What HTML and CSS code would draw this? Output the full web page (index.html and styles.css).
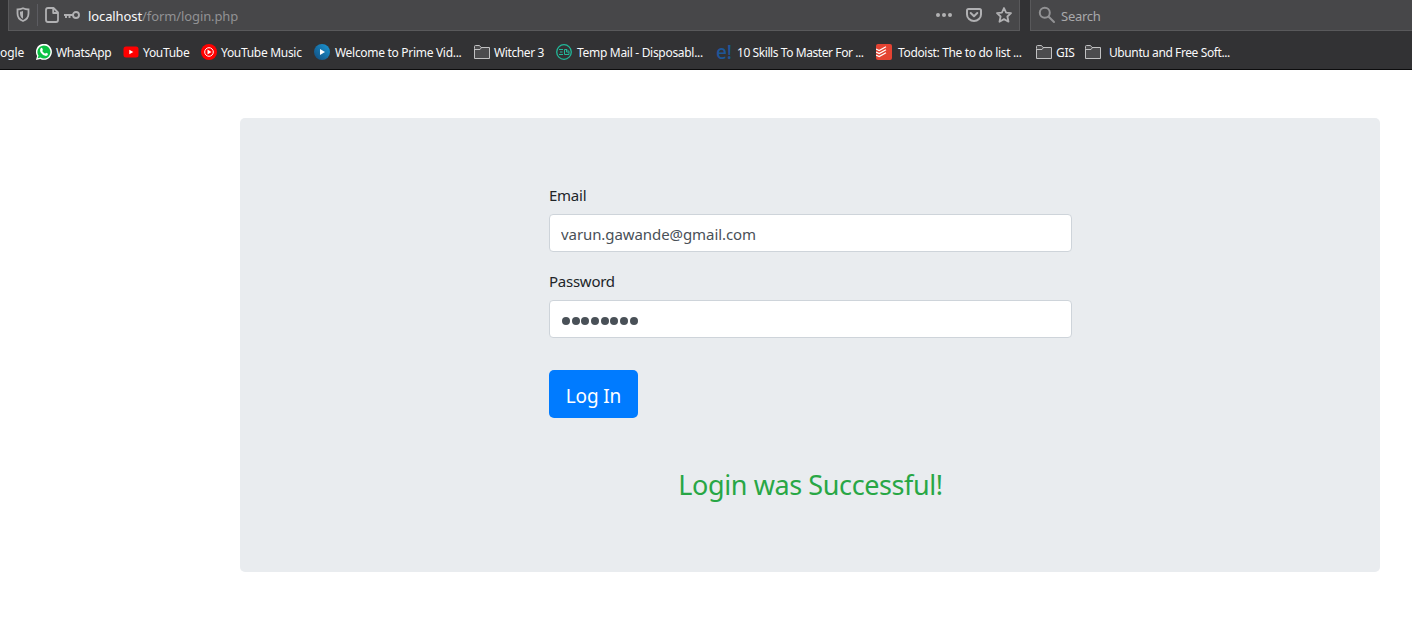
FILE: index.html
```
<!DOCTYPE html>
<html lang="en">
<head>
<meta charset="utf-8">
<title>Login</title>
<link rel="stylesheet" href="styles.css">
</head>
<body>
<header class="chrome">
  <div class="nav">
    <div class="urlbar">
      <svg class="shield" width="14" height="16" viewBox="0 0 14 16" fill="none" stroke="#b1b1b3"><path stroke-width="1.8" d="M1.5 2.5Q4.5 2.5 7 1.3Q9.500 2.500 12.500 2.500V6.500Q12.500 12 7 14Q1.500 12 1.500 6.500Z"/><path fill="#b1b1b3" stroke="none" d="M7 4v7.700Q4.200 10.500 4 6.500V4.700Q5.500 4.600 7 4Z"/></svg>
      <span class="divider"></span>
      <svg class="page-icon" width="14" height="16" viewBox="0 0 14 16" fill="none" stroke="#b1b1b3" stroke-width="1.8" stroke-linejoin="round"><path d="M3 1H8.500L13 5.500V13Q13 15 11 15H3Q1 15 1 13V3Q1 1 3 1ZM8.200 1.500V6H12.500"/></svg>
      <svg class="key" width="16" height="10" viewBox="0 0 16 10" fill="none" stroke="#b1b1b3" stroke-width="1.9"><circle cx="12" cy="5" r="3"/><path d="M9 5H0M2 5v3M5.500 5v3"/></svg>
      <span class="url"><b>localhost</b>/form/login.php</span>
      <svg class="dots" width="16" height="16" viewBox="0 0 16 16" fill="#b1b1b3"><circle cx="2" cy="8" r="2"/><circle cx="8" cy="8" r="2"/><circle cx="14" cy="8" r="2"/></svg>
      <svg width="16" height="16" viewBox="0 0 16 16" fill="none" stroke="#b1b1b3" stroke-width="2" stroke-linecap="round" stroke-linejoin="round"><path d="M2.500 2H13.500Q15 2 15 3.500V7.500A7 6.500 0 0 1 1 7.500V3.500Q1 2 2.500 2ZM4.700 6L8 9.200L11.300 6"/></svg>
      <svg width="16" height="16" viewBox="0 0 16 16" fill="none" stroke="#b1b1b3" stroke-width="1.8" stroke-linejoin="round"><path d="M8 1L10.100 5.600L15 6.100L11.400 9.500L12.500 14.700L8 12.100L3.500 14.700L4.600 9.500L1 6.100L5.900 5.600Z"/></svg>
    </div>
    <div class="searchbar">
      <svg width="18" height="18" viewBox="0 0 18 18" fill="none" stroke="#929294" stroke-width="2" stroke-linecap="round"><circle cx="6.800" cy="6.800" r="5"/><path d="M10.700 10.700L16 16"/></svg>
      <span class="search-text">Search</span>
    </div>
  </div>
  <nav class="bookmarks">
    <span class="mark m-google"><span>ogle</span></span>
    <span class="mark m-whatsapp"><svg width="16" height="16" viewBox="0 0 16 16"><path fill="#fff" d="M0 16L1.100 12A8 8 0 1 1 4.200 14.900Z"/><path fill="#0cc143" d="M1.700 14.300L2.500 11.600A6.500 6.500 0 1 1 4.600 13.600Z"/><path fill="#fff" d="M5 4Q6 3.500 6.400 4.600L6.900 6Q6.700 6.700 6.200 7.100Q7.200 9 9.100 9.700L10 8.700L12 9.700Q12 11.600 10 11.900Q7 11.900 4.900 8.700Q3.200 6 5 4Z"/></svg><span>WhatsApp</span></span>
    <span class="mark m-youtube"><svg width="16" height="16" viewBox="0 0 16 16"><rect x=".5" y="2.500" width="15" height="11" rx="2.500" fill="#f00"/><path fill="#fff" d="M6.300 5.700V10.300L10.300 8Z"/></svg><span>YouTube</span></span>
    <span class="mark m-music"><svg width="16" height="16" viewBox="0 0 16 16"><circle cx="8" cy="8" r="8" fill="#f00"/><circle cx="8" cy="8" r="4.300" fill="none" stroke="#fff"/><path fill="#fff" d="M6.500 5.500V10.500L10.500 8Z"/></svg><span>YouTube Music</span></span>
    <span class="mark m-prime"><svg width="16" height="16" viewBox="0 0 16 16"><defs><linearGradient id="prime" x1="1" y1="0" x2="0" y2="1"><stop stop-color="#1b98d5"/><stop offset="1" stop-color="#124b7c"/></linearGradient></defs><circle cx="8" cy="8" r="8" fill="url(#prime)"/><path fill="#fff" d="M6 5V11L11 8Z"/></svg><span>Welcome to Prime Vid...</span></span>
    <span class="mark m-witcher"><svg width="16" height="16" viewBox="0 0 16 16" fill="#4c4c4e" stroke="#c1c1c2"><path d="M.5 4.500V14.500H15.500V3.500H7L5.500 1.500H1.500Q.5 1.500 .5 2.500ZM.5 5.500H6L7.500 3.500"/></svg><span>Witcher 3</span></span>
    <span class="mark m-temp"><svg width="16" height="16" viewBox="0 0 16 16" fill="none" stroke="#22b899"><circle cx="8" cy="8" r="7.300" stroke-width="1.300"/><path d="M3 5.500H7M4 8H6.500M3 10.500H7M8.500 5.500V10.500H13V7.500L11 5.500H8.500M10.500 5.500V8H13"/></svg><span>Temp Mail - Disposabl...</span></span>
    <span class="mark m-skills"><span class="e-logo">e!</span><span>10 Skills To Master For ...</span></span>
    <span class="mark m-todoist"><svg width="16" height="16" viewBox="0 0 16 16"><rect width="16" height="16" rx="2" fill="#e44332"/><path fill="none" stroke="#fff" stroke-width="1.300" d="M0 5L3.200 6.500L10 2.800M0 8L3.200 9.500L10 5.800M0 11L3.200 12.500L10 8.800"/></svg><span>Todoist: The to do list ...</span></span>
    <span class="mark m-gis"><svg width="16" height="16" viewBox="0 0 16 16" fill="#4c4c4e" stroke="#c1c1c2"><path d="M.5 4.500V14.500H15.500V3.500H7L5.500 1.500H1.500Q.5 1.500 .5 2.500ZM.5 5.500H6L7.500 3.500"/></svg><span>GIS</span></span>
    <span class="mark m-ubuntu"><svg width="16" height="16" viewBox="0 0 16 16" fill="#4c4c4e" stroke="#c1c1c2"><path d="M.5 4.500V14.500H15.500V3.500H7L5.500 1.500H1.500Q.5 1.500 .5 2.500ZM.5 5.500H6L7.500 3.500"/></svg><span>Ubuntu and Free Soft...</span></span>
  </nav>
</header>
<main class="jumbotron">
  <form class="login">
    <label class="label" for="email">Email</label>
    <input class="field" id="email" type="text" value="varun.gawande@gmail.com">
    <label class="label" for="password">Password</label>
    <div class="field secret" id="password"><i></i><i></i><i></i><i></i><i></i><i></i><i></i><i></i></div>
    <button class="submit" type="button"><span>Log In</span></button>
  </form>
  <p class="message">Login was Successful!</p>
</main>
</body>
</html>
```
FILE: styles.css
```
* { box-sizing: border-box; }
body {
  margin: 0;
  height: 640px;
  overflow: hidden;
  background: #fff;
  color: #212529;
  font-family: "Noto Sans", "Open Sans", sans-serif;
}
svg { display: block; flex: none; }

.chrome {
  height: 70px;
  background: #323234;
  border-bottom: 1px solid #0c0c0d;
}
.nav { display: flex; gap: 10px; height: 31px; padding-left: 8px; }
.urlbar, .searchbar {
  display: flex;
  align-items: center;
  height: 31px;
  background: #474749;
  border: 1px solid #59595b;
  border-top: 0;
}
.urlbar { width: 1012px; padding: 0 7px; }
.divider { width: 1px; height: 22px; margin: 0 7px; background: #5c5c61; }
.key { margin: 0 8px 0 5px; }
.url { flex: 1; font-size: 13px; line-height: 30px; padding-top: 2px; color: #929294; letter-spacing: -.1px; white-space: nowrap; }
.url b { font-weight: 400; color: #f9f9fa; }
.urlbar svg.dots ~ svg { margin-left: 14px; }
.searchbar { flex: 1; border-right: 0; padding-left: 7px; gap: 5px; }
.search-text { font-size: 13px; padding-top: 2px; color: #a9a9ab; letter-spacing: -.25px; }

.bookmarks {
  display: grid;
  grid-template-columns: 36px 87px 78px 113px 160px 82px 160px 160px 160px 49px 1fr;
  align-items: center;
  height: 38px;
  padding-top: 4px;
}
.mark {
  display: flex;
  align-items: center;
  gap: 4px;
  color: #f9f9fa;
  font-size: 12px;
  line-height: 16px;
  letter-spacing: -.3px;
  white-space: nowrap;
}
.mark > span { padding-top: 2px; }
.m-google { letter-spacing: -.1px; }
.m-prime, .m-temp, .m-skills { gap: 5px; }
.m-witcher { letter-spacing: -.4px; }
.m-skills { letter-spacing: -.42px; }
.m-todoist { gap: 6px; letter-spacing: -.34px; }
.m-ubuntu { gap: 8px; letter-spacing: -.4px; }
.mark > .e-logo { width: 16px; padding-top: 0; color: #1e5698; font-size: 19px; font-weight: 500; line-height: 16px; letter-spacing: -.2px; }

.jumbotron {
  width: 1140px;
  height: 454px;
  margin: 48px 0 0 240px;
  padding: 64px 308px 0 309px;
  background: #e9ecef;
  border-radius: 5px;
}
.login { display: flex; flex-direction: column; align-items: flex-start; }
.label { height: 24px; margin-bottom: 8px; font-size: 15px; line-height: 27px; letter-spacing: -.25px; }
.field {
  width: 523px;
  height: 38px;
  margin: 0 0 16px;
  padding: 1px 11px 0;
  border: 1px solid #ced4da;
  border-radius: 4px;
  background: #fff;
  color: #495057;
  font: 15px "Noto Sans", sans-serif;
  letter-spacing: -.08px;
}
.secret { display: flex; align-items: center; gap: 1.700px; padding-left: 12px; padding-top: 4px; }
.secret i { width: 8px; height: 8px; border-radius: 50%; background: #495057; }
.submit {
  width: 89px;
  height: 48px;
  margin-top: 16px;
  padding: 4px 0 0;
  border: 0;
  border-radius: 5px;
  background: #007bff;
  color: #fff;
  font: 19px "Noto Sans", sans-serif;
  letter-spacing: -.15px;
}
.message {
  margin: 48px 0 0;
  color: #28a745;
  font-size: 27px;
  line-height: 37px;
  letter-spacing: -.4px;
  text-align: center;
  white-space: nowrap;
}
```
